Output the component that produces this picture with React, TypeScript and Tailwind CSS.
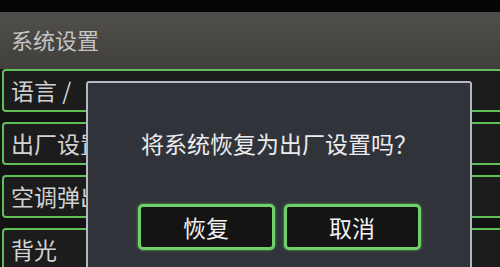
const rows = ["语言 /", "出厂设置", "空调弹出", "背光"];

function DialogButton({ label }: { label: string }) {
  return (
    <button className="w-[137px] h-[46px] rounded-[5px] border-[3px] border-[#6fd06a] bg-[#141414] text-[23px] leading-none text-[#f2f2f2] shadow-[0_0_3px_#4caf50]">
      {label}
    </button>
  );
}

export default function App() {
  return (
    <div
      className="relative w-[500px] h-[267px] overflow-hidden bg-[#121312]"
      style={{ fontFamily: '"Noto Sans CJK SC", "Noto Sans", sans-serif' }}
    >
      <div className="h-[12px] bg-[#050505]" />
      <div className="h-[57px] bg-gradient-to-b from-[#504f4b] to-[#403f3c] pl-[11px] pt-[13px]">
        <span className="text-[22px] leading-[28px] text-[#c4c4c2]">系统设置</span>
      </div>

      <div className="flex flex-col gap-[10px] pl-[2px]">
        {rows.map((r) => (
          <div
            key={r}
            className="w-[520px] h-[43px] shrink-0 flex items-center pl-[7px] rounded-sm border-2 border-[#5fbf58] bg-[#1b1c1b] text-[23px] leading-none text-[#d2d2d2]"
          >
            {r}
          </div>
        ))}
      </div>

      <div className="absolute left-[86px] top-[81px] w-[386px] h-[200px] rounded-[3px] border-2 border-[#b4b8c0] bg-[#31333b] flex flex-col items-center">
        <p className="mt-[46px] text-[23px] leading-[28px] text-[#ececec]">
          将系统恢复为出厂设置吗？
        </p>
        <div className="mt-[47px] flex gap-[9px]">
          <DialogButton label="恢复" />
          <DialogButton label="取消" />
        </div>
      </div>
    </div>
  );
}
